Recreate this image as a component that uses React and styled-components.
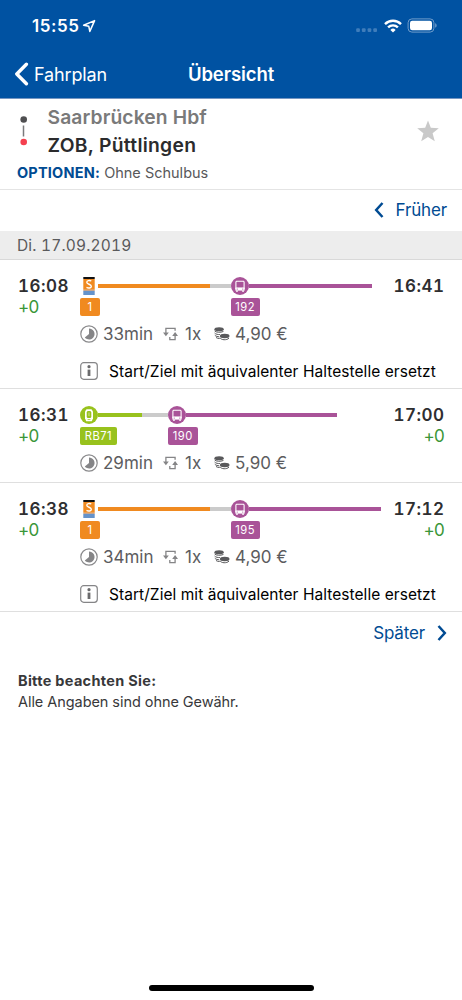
import React from "react";
import styled, { createGlobalStyle } from "styled-components";

const GlobalStyle = createGlobalStyle`
  *, *::before, *::after { box-sizing: border-box; }
  body { margin: 0; background: #fff; }
  svg { display: block; flex: none; }
`;

const blue = "#0052a2";

const Screen = styled.div`
  width: 462px;
  height: 1000px;
  display: flex;
  flex-direction: column;
  background: #fff;
  color: #2e2e30;
  font-family: Inter, "Liberation Sans", sans-serif;
  white-space: nowrap;
  overflow: hidden;
`;

const Header = styled.header`
  height: 99px;
  flex: none;
  background: ${blue};
  border-bottom: 1px solid #7596c2;
  color: #fff;
`;

const StatusBar = styled.div`
  height: 51px;
  padding: 0 24px 0 32px;
  display: flex;
  align-items: center;
`;

const Clock = styled.span`
  font-size: 17px;
  font-weight: 600;
  letter-spacing: 0.55px;
  margin-right: 3px;
`;

const Indicators = styled.div`
  margin-left: auto;
  display: flex;
  align-items: center;
  gap: 5.5px;
`;

const NavBar = styled.nav`
  height: 46px;
  display: grid;
  grid-template-columns: 1fr auto 1fr;
  align-items: center;
  padding: 0 14px;
`;

const Back = styled.a`
  display: flex;
  align-items: center;
  gap: 5px;
  font-size: 18px;
  letter-spacing: -0.15px;
`;

const Title = styled.h1`
  margin: 0;
  font-size: 18.5px;
  font-weight: 600;
  letter-spacing: -0.1px;
`;

const Trip = styled.section`
  height: 91px;
  flex: none;
  padding: 4px 23px 0 17px;
  border-bottom: 1.5px solid #e4e4e4;
`;

const Route = styled.div`
  display: flex;
  align-items: center;
  height: 56px;
`;

const Stations = styled.div`
  margin-left: 17.5px;
  flex: 1;
  font-size: 19.3px;
  font-weight: 600;
  line-height: 28px;
`;

const Origin = styled.div`
  color: #7a7a7a;
  letter-spacing: 0.1px;
`;

const Destination = styled.div`
  color: #2b2b2d;
  letter-spacing: 0.28px;
`;

const Options = styled.div`
  font-size: 14.5px;
  line-height: 28px;
  color: #58585a;
  b { color: #004b93; font-weight: 700; letter-spacing: 0.2px; }
`;

const Pager = styled.div`
  height: ${(p) => p.$height}px;
  flex: none;
  display: flex;
  align-items: center;
  justify-content: flex-end;
  gap: 12px;
  padding: 0 15px 1px 0;
  font-size: 17px;
  letter-spacing: -0.15px;
  color: #004b93;
`;

const DateBar = styled.div`
  height: 29px;
  flex: none;
  padding-left: 17px;
  line-height: 29px;
  background: #ededed;
  border-bottom: 1px solid #d9d9d9;
  font-size: 15.5px;
  font-variant-numeric: tabular-nums;
  letter-spacing: 0.17px;
  color: #5a5a5c;
`;

const ConnectionRow = styled.article`
  flex: none;
  height: ${(p) => p.$height}px;
  padding: 15px 18px 0;
  border-bottom: 1px solid #dfdfdf;
`;

const Journey = styled.div`
  display: flex;
  height: 42px;
`;

const TimeColumn = styled.div`
  flex: ${(p) => (p.$end ? "1" : "0 0 62px")};
  text-align: ${(p) => (p.$end ? "right" : "left")};
  line-height: 21px;
  padding-top: 1px;
`;

const Time = styled.div`
  font-size: 17px;
  font-weight: 600;
  letter-spacing: 0.5px;
  margin-right: -0.5px;
  font-variant-numeric: tabular-nums;
  color: #2e2e30;
`;

const Delay = styled.div`
  font-size: 17px;
  letter-spacing: -0.7px;
  color: #3a9638;
`;

const Leg = styled.div`
  width: ${(p) => p.$width}px;
  flex: none;
`;

const Track = styled.div`
  height: 22px;
  display: flex;
  align-items: center;
`;

const Bar = styled.span`
  height: 4.5px;
  width: ${(p) => (p.$width ? `${p.$width}px` : "auto")};
  flex: ${(p) => (p.$width ? "none" : "1")};
  background: ${(p) => p.$color};
`;

const LineBadge = styled.span`
  display: inline-flex;
  align-items: center;
  justify-content: center;
  vertical-align: top;
  height: 18px;
  min-width: 20px;
  padding: 0 4.8px;
  margin-top: 1px;
  border-radius: 2px;
  background: ${(p) => p.$color};
  color: #fff;
  font-size: 11.2px;
  letter-spacing: 0.45px;
`;

const Facts = styled.div`
  display: flex;
  align-items: center;
  height: 34px;
  padding-left: 62px;
  font-size: 17px;
  color: #5c5c5e;
`;

const Fact = styled.span`
  display: flex;
  align-items: center;
  gap: ${(p) => p.$gap}px;
  width: ${(p) => p.$width}px;
`;

const Notice = styled.div`
  display: flex;
  align-items: center;
  gap: 11px;
  height: 40px;
  padding-left: 62px;
  font-size: 15.5px;
  letter-spacing: 0.05px;
  color: #000;
`;

const Disclaimer = styled.section`
  padding: 16px 18px 0;
  font-size: 14.5px;
  line-height: 21px;
  letter-spacing: -0.06px;
  color: #38383a;
  b { font-weight: 700; display: block; letter-spacing: 0.3px; }
`;

const HomeIndicator = styled.div`
  width: 165px;
  height: 6px;
  margin: auto auto 9px;
  flex: none;
  border-radius: 3px;
  background: #000;
`;

const LocationArrow = () => (
  <svg width="14" height="14" viewBox="0 0 14 14">
    <path d="M12.6 1.6 1.600 6.300l5.200 1 1 5.100z" fill="none" stroke="#fff" strokeWidth="1.5" strokeLinejoin="round" />
  </svg>
);

const Signal = () => (
  <svg width="22" height="14" viewBox="0 0 22 14" fill="#3f7dbb">
    {[0, 5.7, 11.4, 17.1].map((x) => (
      <rect key={x} x={x + 0.2} y="9.2" width="3.7" height="3.7" rx="1" />
    ))}
  </svg>
);

const Wifi = () => (
  <svg width="18" height="14" viewBox="0 0 18 14" fill="none" stroke="#fff" strokeWidth="2.4">
    <path d="M1 5.1a11.4 11.4 0 0 1 16 0" />
    <path d="M4.1 8.4a7 7 0 0 1 9.8 0" />
    <path d="M9 13.4 6.4 10.9a3.7 3.7 0 0 1 5.2 0z" fill="#fff" stroke="none" />
  </svg>
);

const Battery = () => (
  <svg width="31" height="15" viewBox="0 0 31 15">
    <rect x="1.1" y="0.9" width="25.8" height="13.2" rx="3.8" fill="none" stroke="#6f9ccb" strokeWidth="1" />
    <rect x="3" y="2.8" width="22" height="9.4" rx="2.2" fill="#fff" />
    <path d="M28.2 5.3c1.9.7 1.9 3.7 0 4.4z" fill="#6f9ccb" />
  </svg>
);

const Chevron = ({ flip }) => (
  <svg width="10" height="16" viewBox="0 0 10 16" fill="none" stroke="currentColor" strokeWidth="2.5">
    <path d={flip ? "M1.500 1 7.800 8 1.500 15" : "M8.500 1 2.200 8 8.500 15"} />
  </svg>
);

const BackChevron = () => (
  <svg width="15" height="24" viewBox="0 0 15 24">
    <path d="M12.4 2.2 2.8 12l9.6 9.8" fill="none" stroke="#fff" strokeWidth="3.4" strokeLinecap="round" strokeLinejoin="round" />
  </svg>
);

const RouteMarker = () => (
  <svg width="13" height="34" viewBox="0 0 13 34">
    <circle cx="6.7" cy="5.5" r="3.3" fill="#4f4f51" />
    <path d="M6.5 11.5v11" stroke="#7a7a7c" strokeWidth="1.5" />
    <circle cx="6.7" cy="28" r="3.3" fill="#f4404f" />
  </svg>
);

const Star = () => (
  <svg width="22" height="22" viewBox="0 0 22 22">
    <path d="M11 0.6 13.8 7.8 21.8 8.3 15.6 13.3 17.8 21.2 11 16.9 4.2 21.2 6.4 13.3 0.2 8.3 8.2 7.8z" fill="#c9c9c9" />
  </svg>
);

const TramGlyph = () => (
  <svg width="18" height="18" viewBox="0 0 18 18">
    <rect x="3.3" y="0" width="11.4" height="2" fill="#111" />
    <rect x="3.3" y="2" width="11.4" height="10.8" fill="#f08a20" />
    <rect x="3.3" y="12.8" width="11.4" height="1.3" fill="#c8a58c" />
    <rect x="3.3" y="14" width="11.4" height="4" fill="#6593cb" />
    <path d="M11.3 4C9.6 3.1 6.8 3.3 6.8 5.300c0 2.300 4.500 1.600 4.500 3.900 0 2.100-2.900 2.200-4.800 1.200" fill="none" stroke="#fff" strokeWidth="1.4" />
  </svg>
);

const TrainGlyph = () => (
  <svg width="18" height="18" viewBox="0 0 18 18">
    <circle cx="9" cy="9" r="9" fill="#98c21d" />
    <path d="M6.5 3.300h5l1.500 2.200v6.800L11.800 15.200H6.200L5 12.300V5.500z" fill="#fff" />
    <path d="M7.500 4.900h3l.8 1.700v4.300l-.8 1.200h-3l-.8-1.200V6.600z" fill="#98c21d" />
    <path d="M8.200 6.400h1.600v3.700H8.200z" fill="#b9d566" />
    <path d="M7.600 13.500h2.800" stroke="#98c21d" strokeWidth="0.7" />
  </svg>
);

const BusGlyph = () => (
  <svg width="18" height="18" viewBox="0 0 18 18">
    <circle cx="9" cy="9" r="9" fill="#a95398" />
    <path d="M5.500 4.200h7l.6.7v6.500H4.900V4.900z" fill="none" stroke="#fff" strokeWidth="1.1" />
    <path d="M4.350 10.600h9.300v3H4.350z" fill="#fff" />
    <path d="M5 13.500h1.900v1.200H5zM11.100 13.500h1.900v1.200h-1.900z" fill="#fff" />
    <circle cx="6.2" cy="12.1" r="0.55" fill="#a95398" />
    <circle cx="11.8" cy="12.1" r="0.55" fill="#a95398" />
  </svg>
);

const DurationIcon = () => (
  <svg width="18" height="18" viewBox="0 0 18 18">
    <circle cx="9" cy="9" r="8.2" fill="none" stroke="#8a8a8c" strokeWidth="1.2" />
    <path d="M9 3.500a5.500 5.500 0 1 1-4.200 9L9 9z" fill="#858587" />
  </svg>
);

const TransferIcon = () => (
  <svg width="15" height="14" viewBox="0 0 15 14" fill="none" stroke="#858587" strokeWidth="1.3">
    <path d="M2.900 6V1.400h9.200v2.300" />
    <path d="M12.100 8v4.700H6.800V9.900" />
    <path d="M0 5.400h5.800L2.900 9.200zM9.200 8.900H15l-2.900-3.800z" fill="#858587" stroke="none" />
  </svg>
);

const CoinsIcon = () => (
  <svg width="16" height="14" viewBox="0 0 16 14">
    <g fill="none" stroke="#59595b" strokeWidth="1">
      <path d="M.6 3.900c1.200 1.600 6 1.800 8.800.6M.6 6c1.200 1.400 3.600 1.600 5.300 1.500M.8 8.200c1.200 1.300 3 1.500 4.400 1.500M2 10.500c1 .8 2.500 1 3.700 1M6 10.700c1 2.500 6.900 2.800 9 .4" />
    </g>
    <ellipse cx="5.100" cy="2.200" rx="4.700" ry="2" fill="#59595b" />
    <ellipse cx="10.700" cy="9" rx="4.800" ry="2.200" fill="#59595b" />
  </svg>
);

const InfoIcon = () => (
  <svg width="18" height="18" viewBox="0 0 18 18">
    <rect x="0.7" y="0.7" width="16.6" height="16.6" rx="3" fill="none" stroke="#858587" strokeWidth="1.2" />
    <circle cx="9" cy="4.7" r="1.6" fill="#6b6b6d" />
    <path d="M9 7.600v6.400" stroke="#6b6b6d" strokeWidth="2.8" />
  </svg>
);

const modes = {
  tram: { color: "#f08a20", Glyph: TramGlyph },
  train: { color: "#98c21d", Glyph: TrainGlyph },
  bus: { color: "#a95398", Glyph: BusGlyph },
};

const connections = [
  {
    depart: "16:08", departDelay: "+0", arrive: "16:41",
    legs: [
      { mode: "tram", line: "1", width: 150.5, wait: 20.5 },
      { mode: "bus", line: "192", width: 141.5 },
    ],
    duration: "33min", changes: "1x", price: "4,90 €",
    notice: "Start/Ziel mit äquivalenter Haltestelle ersetzt",
    height: 129,
  },
  {
    depart: "16:31", departDelay: "+0", arrive: "17:00", arriveDelay: "+0",
    legs: [
      { mode: "train", line: "RB71", width: 88, wait: 26.5 },
      { mode: "bus", line: "190", width: 168.5 },
    ],
    duration: "29min", changes: "1x", price: "5,90 €",
    height: 94,
  },
  {
    depart: "16:38", departDelay: "+0", arrive: "17:12", arriveDelay: "+0",
    legs: [
      { mode: "tram", line: "1", width: 150.5, wait: 20.5 },
      { mode: "bus", line: "195", width: 150.5 },
    ],
    duration: "34min", changes: "1x", price: "4,90 €",
    notice: "Start/Ziel mit äquivalenter Haltestelle ersetzt",
    height: 129,
  },
];

function Connection({ data }) {
  return (
    <ConnectionRow $height={data.height}>
      <Journey>
        <TimeColumn>
          <Time>{data.depart}</Time>
          <Delay>{data.departDelay}</Delay>
        </TimeColumn>
        {data.legs.map(({ mode, line, width, wait }) => {
          const { color, Glyph } = modes[mode];
          return (
            <Leg key={line} $width={width}>
              <Track>
                <Glyph />
                <Bar $color={color} />
                {wait && <Bar $color="#cbcbcb" $width={wait} />}
              </Track>
              <LineBadge $color={color}>{line}</LineBadge>
            </Leg>
          );
        })}
        <TimeColumn $end>
          <Time>{data.arrive}</Time>
          {data.arriveDelay && <Delay>{data.arriveDelay}</Delay>}
        </TimeColumn>
      </Journey>
      <Facts>
        <Fact $gap={5} $width={83}><DurationIcon />{data.duration}</Fact>
        <Fact $gap={7} $width={51}><TransferIcon />{data.changes}</Fact>
        <Fact $gap={5} $width={80}><CoinsIcon />{data.price}</Fact>
      </Facts>
      {data.notice && <Notice><InfoIcon />{data.notice}</Notice>}
    </ConnectionRow>
  );
}

export default function App() {
  return (
    <Screen>
      <GlobalStyle />
      <Header>
        <StatusBar>
          <Clock>15:55</Clock>
          <LocationArrow />
          <Indicators>
            <Signal />
            <Wifi />
            <Battery />
          </Indicators>
        </StatusBar>
        <NavBar>
          <Back><BackChevron />Fahrplan</Back>
          <Title>Übersicht</Title>
        </NavBar>
      </Header>
      <Trip>
        <Route>
          <RouteMarker />
          <Stations>
            <Origin>Saarbrücken Hbf</Origin>
            <Destination>ZOB, Püttlingen</Destination>
          </Stations>
          <Star />
        </Route>
        <Options><b>OPTIONEN:</b> Ohne Schulbus</Options>
      </Trip>
      <Pager $height={41}>
        <Chevron />
        Früher
      </Pager>
      <DateBar>Di. 17.09.2019</DateBar>
      {connections.map((c) => (
        <Connection key={c.depart} data={c} />
      ))}
      <Pager $height={42}>
        Später
        <Chevron flip />
      </Pager>
      <Disclaimer>
        <b>Bitte beachten Sie:</b>
        Alle Angaben sind ohne Gewähr.
      </Disclaimer>
      <HomeIndicator />
    </Screen>
  );
}
